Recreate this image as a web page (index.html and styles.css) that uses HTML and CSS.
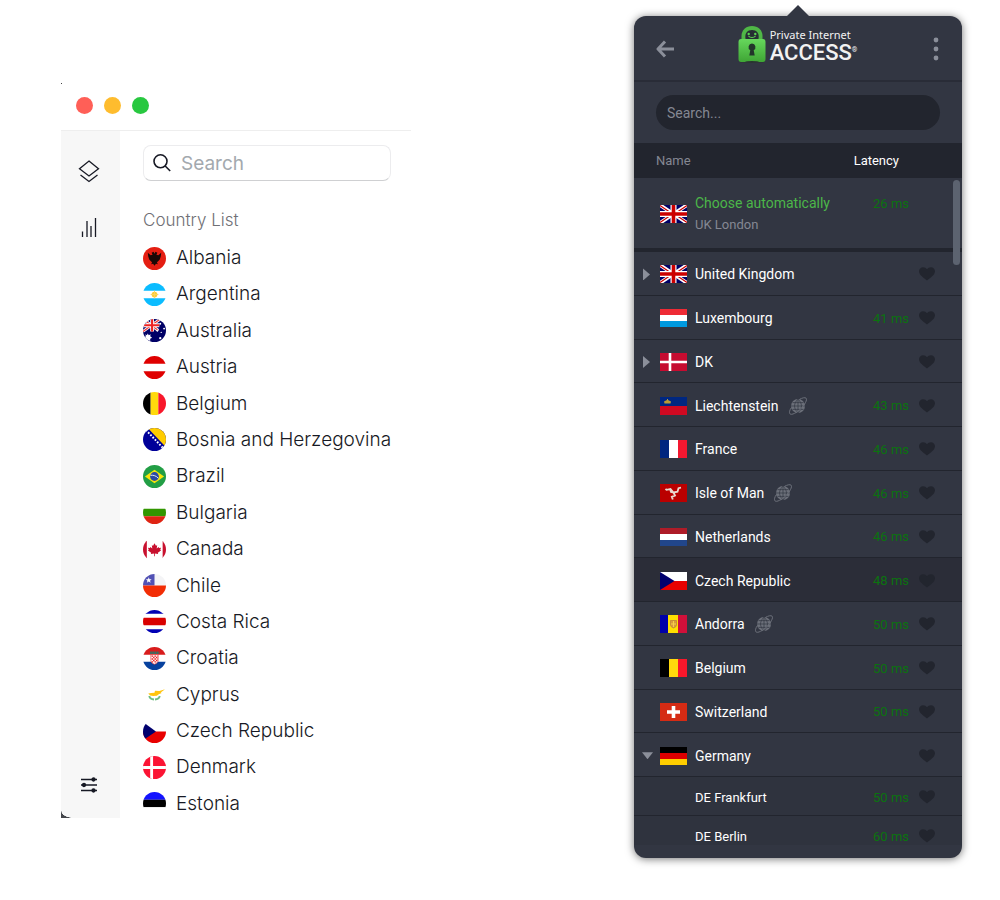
FILE: index.html
```html
<!DOCTYPE html>
<html lang="en">
<head>
<meta charset="utf-8">
<title>VPN server lists</title>
<link rel="stylesheet" href="styles.css">
</head>
<body>
<svg class="defs" aria-hidden="true">
  <symbol id="uk" viewBox="0 0 27 18"><path fill="#006" d="M0 0h27v18H0z"/><path stroke="#fff" stroke-width="3.6" d="M0 0l27 18M27 0L0 18"/><path stroke="#c00" stroke-width="1.2" d="M0 .6l10 6.6M27 17.4l-10-6.6M27 .6l-10 6.6M0 17.4l10-6.6"/><path stroke="#fff" stroke-width="6" d="M13.500 0v18M0 9h27"/><path stroke="#c00" stroke-width="3.600" d="M13.500 0v18M0 9h27"/></symbol>
  <symbol id="heart" viewBox="0 0 16 14"><path fill="#22252e" d="M8 13.600C5 11 0 8 0 4.300 0 2 1.800.2 4.100.2 5.700.2 7.200 1 8 2.300 8.800 1 10.300.2 11.900.2 14.200.2 16 2 16 4.300 16 8 11 11 8 13.600z"/></symbol>
  <symbol id="globe" viewBox="0 0 18 18"><circle cx="9" cy="9" r="7" fill="#6c707a"/><path fill="none" stroke="#323642" stroke-width=".7" d="M9 2v14M2 9h14M3.500 5.600h11M3.500 12.400h11M9 2.200c-4.600 4-4.600 9.600 0 13.600M9 2.200c4.600 4 4.600 9.600 0 13.600"/><path fill="none" stroke="#6c707a" stroke-width="1" d="M2.500 10.500C.6 13-.1 15.700 1 16.900c1.500 1.500 6.900-1.200 11-5.300C16 7.500 18.500 2.600 17.100 1.200 16 .2 13.200.8 10.500 2.400"/></symbol>
</svg>

<main class="stage">
  <section class="window">
    <header class="titlebar">
      <button class="light red" aria-label="Close"></button>
      <button class="light amber" aria-label="Minimize"></button>
      <button class="light green" aria-label="Zoom"></button>
    </header>
    <div class="window-body">
      <nav class="sidebar">
        <button class="nav-button" aria-label="Locations"><svg viewBox="0 0 24 24"><path d="M12 2l9.500 7.700L12 17 2.500 9.700zM3.500 16l8.500 6.500 8.500-6.500"/></svg></button>
        <button class="nav-button" aria-label="Statistics"><svg viewBox="0 0 24 24"><path d="M5.500 16.500V22M10 6v16M14 11v11M18.500 3v19"/></svg></button>
        <button class="nav-button last" aria-label="Settings"><svg viewBox="0 0 24 24"><path d="M4 6.500h16M4 12h16M4 17.500h16"/><circle cx="16.500" cy="6.500" r="1.500"/><circle cx="7" cy="12" r="1.500"/><circle cx="16.500" cy="17.500" r="1.500"/></svg></button>
      </nav>
      <div class="content">
        <label class="search">
          <svg viewBox="0 0 20 20" aria-hidden="true"><circle cx="8.500" cy="8.300" r="6.500"/><path d="M13.200 13l5 5"/></svg>
          <input type="search" placeholder="Search" aria-label="Search">
        </label>
        <h2 class="list-title">Country List</h2>
        <ul class="countries">
          <li><svg class="round" viewBox="0 0 24 24"><path fill="#e41e12" d="M0 0h24v24H0z"/><path d="M12 7l1-2 2 1-1 2 2 .5L19 6l-.5 4-1 3-2 2-1 1 1 2-2-.5L12 19.500 10.500 17.500l-2 .5 1-2-1-1-2-2-1-3L5 6l3 2.500 2-.5-1-2 2-1z" fill="#1a0806"/></svg>Albania</li>
          <li><svg class="round" viewBox="0 0 24 24"><path fill="#fff" d="M0 0h24v24H0z"/><path fill="#0bbcff" d="M0 0h24v8H0zM0 16h24v8H0z"/><circle cx="12" cy="12" r="3" fill="#fc3"/><path stroke="#fbd460" d="M12 8v8M8 12h8"/></svg>Argentina</li>
          <li><svg class="round" viewBox="0 0 24 24"><path fill="#006" d="M0 0h24v24H0z"/><path stroke="#fff" stroke-width="3" d="M0 0l16 12M18 0L0 13"/><path stroke="#e33" stroke-width="1.200" d="M0 0l16 12M18 0L0 13"/><path stroke="#fff" stroke-width="4" d="M9.500 0v13M0 6.500h17"/><path stroke="#e22" stroke-width="2.200" d="M9.500 0v13M0 6.500h17"/><path fill="#fff" d="M5 15l1 2 2-1-.5 2 2 1.500-2 1V23l-2-1-2 1-.5-2.500-2-1L3 18l-.5-2L4 17z"/><g fill="#fff"><circle cx="18" cy="5" r="1"/><circle cx="15" cy="12" r="1"/><circle cx="22" cy="10" r="1"/><circle cx="19" cy="14" r=".7"/><circle cx="18" cy="20" r="1.200"/></g></svg>Australia</li>
          <li><svg class="round" viewBox="0 0 24 24"><path fill="#fff" d="M0 0h24v24H0z"/><path fill="#df0000" d="M0 0h24v8H0zM0 16h24v8H0z"/></svg>Austria</li>
          <li><svg class="round" viewBox="0 0 24 24"><path d="M0 0h8v24H0z"/><path fill="#ffd90c" d="M8 0h8v24H8z"/><path fill="#f8172b" d="M16 0h8v24h-8z"/></svg>Belgium</li>
          <li><svg class="round" viewBox="0 0 24 24"><path fill="#009" d="M0 0h24v24H0z"/><path fill="#fc0" d="M5 0h19v20z"/><path stroke="#fff" stroke-width="2" stroke-dasharray="1.800 1.600" d="M3 2l18 19"/></svg>Bosnia and Herzegovina</li>
          <li><svg class="round" viewBox="0 0 24 24"><path fill="#229e45" d="M0 0h24v24H0z"/><path fill="#f8e509" d="M12 5l10 7-10 7-10-7z"/><circle cx="12" cy="12" r="4.600" fill="#2b49a3"/><path fill="none" stroke="#e8eef8" stroke-width="1" d="M7.800 10.800c3-.5 6 .5 8.200 3"/></svg>Brazil</li>
          <li><svg class="round" viewBox="0 0 24 24"><path fill="#fff" d="M0 0h24v8H0z"/><path fill="#329600" d="M0 8h24v8H0z"/><path fill="#df2413" d="M0 16h24v8H0z"/></svg>Bulgaria</li>
          <li><svg class="round" viewBox="0 0 24 24"><path fill="#fff" d="M0 0h24v24H0z"/><path fill="#c8102e" d="M0 0h4v24H0zM20.500 0H24v24h-3.500zM12 5.500l1.500 2.500 1.300-.5-.5 3.500 2-1.500.5 1 2-.2-.8 2 .8.700-3.300 2.500.3 1.200-3.400-.5V19h-.8v-2.800l-3.400.5.3-1.200-3.300-2.500.8-.7-.8-2 2 .2.500-1 2 1.500-.5-3.500 1.300.5z"/></svg>Canada</li>
          <li><svg class="round" viewBox="0 0 24 24"><path fill="#f4f4f6" d="M0 0h24v12H0z"/><path fill="#5151b4" d="M0 0h12v12H0z"/><path fill="#f22d05" d="M0 12h24v12H0z"/><path fill="#fff" d="M6 3.500l.8 2.100H9L7.300 7 8 9.200 6 7.900 4 9.200 4.700 7 3 5.600h2.200z"/></svg>Chile</li>
          <li><svg class="round" viewBox="0 0 24 24"><path fill="#fff" d="M0 0h24v24H0z"/><path fill="#0000b4" d="M0 0h24v4H0zM0 20h24v4H0z"/><path fill="#d90000" d="M0 8h24v8H0z"/></svg>Costa Rica</li>
          <li><svg class="round" viewBox="0 0 24 24"><path fill="#fff" d="M0 0h24v24H0z"/><path fill="#d81c1c" d="M0 0h24v8H0z"/><path fill="#07419e" d="M0 15.500h24V24H0z"/><path fill="#fff" stroke="#e33" stroke-width=".7" d="M8.200 8h7.600v5.500c0 2.500-1.500 3.700-3.800 4.500-2.300-.8-3.800-2-3.800-4.500z"/><path stroke="#e22" stroke-width="1.500" stroke-dasharray="1.500 1.500" d="M9 9.500h6.500M10.500 11h5M9 12.500h6.500M10.500 14h5M9 15.500h6"/><path stroke="#267a6c" stroke-width="2.400" stroke-dasharray="1.700 .5" d="M7.500 6h9.500"/></svg>Croatia</li>
          <li><svg class="round" viewBox="0 0 24 24"><path fill="#fff" d="M0 0h24v24H0z"/><path fill="#ffc40d" d="M5.500 11l3-.5 3.500-.3.500-2 4.500.2 6-1.900-4.500 3.500 1 .5-3 1.200-2 1.700-4 .2-3-.6z"/><path fill="none" stroke="#6fbd83" stroke-width="2" d="M6.500 13.500c.5 2 2.500 3.500 5 3.700M17.500 13.500c-.5 2-2.500 3.500-5 3.700"/></svg>Cyprus</li>
          <li><svg class="round" viewBox="0 0 24 24"><path fill="#fff" d="M0 0h24v12H0z"/><path fill="#e80000" d="M0 12h24v12H0z"/><path fill="#00006e" d="M0 2l13.500 10L0 21z"/></svg>Czech Republic</li>
          <li><svg class="round" viewBox="0 0 24 24"><path fill="#fb1434" d="M0 0h24v24H0z"/><path stroke="#fff" stroke-width="3" d="M9 0v24M0 12h24"/></svg>Denmark</li>
          <li><svg class="round" viewBox="0 0 24 24"><path fill="#1313ff" d="M0 0h24v8H0z"/><path d="M0 8h24v8H0z"/><path fill="#fff" d="M0 16h24v8H0z"/></svg>Estonia</li>
        </ul>
      </div>
    </div>
  </section>

  <section class="popover">
    <header class="popover-head">
      <button class="icon-button" aria-label="Back"><svg width="18" height="18" viewBox="0 0 18 18"><path fill="none" stroke="#8b8f9a" stroke-width="3" stroke-linejoin="round" d="M9 1.500L2 9l7 7.500M2.500 9H18"/></svg></button>
      <div class="brand">
        <svg width="28" height="38" viewBox="0 0 28 38" aria-hidden="true">
          <defs><linearGradient id="lock" x2="0" y2="1"><stop offset="0" stop-color="#66d75c"/><stop offset="1" stop-color="#3fa535"/></linearGradient></defs>
          <ellipse cx="14" cy="36.500" rx="13" ry="1.200" fill="#29352f"/>
          <path fill="#4fb746" d="M3.500 17v-6C3.500 5 8 1 14 1s10.500 4 10.500 10v6z"/>
          <path fill="#262e33" d="M7.500 14c-1-6 2-9 6.500-9s7.500 3 6.500 9z"/>
          <g fill="#5bd152"><circle cx="10.700" cy="9" r="1.200"/><circle cx="17.300" cy="9" r="1.200"/></g>
          <path fill="none" stroke="#5bd152" stroke-width="1.200" d="M10.500 11c1.500 2 5.500 2 7 0"/>
          <path fill="url(#lock)" d="M3 14h22q2.500 0 2.500 3v17q0 3-2.500 3h-4q-1-1-7-1t-7 1H3Q.5 37 .5 34V17q0-3 2.500-3z"/>
          <path fill="#22352a" d="M14 18.500a3.600 3.600 0 0 1 1.700 6.700l1 5.300h-5.400l1-5.300A3.600 3.600 0 0 1 14 18.500z"/>
        </svg>
        <div class="brand-text"><span class="brand-top">Private Internet</span><span class="brand-main">ACCESS<sup>®</sup></span></div>
      </div>
      <button class="icon-button menu" aria-label="Menu"><svg width="6" height="24" viewBox="0 0 6 24" fill="#8b8f9a"><circle cx="3" cy="3" r="2.400"/><circle cx="3" cy="12" r="2.400"/><circle cx="3" cy="21" r="2.400"/></svg></button>
    </header>
    <div class="filter"><input type="text" placeholder="Search..." aria-label="Search locations"></div>
    <div class="scroller">
      <table class="regions">
        <thead><tr><th scope="col">Name</th><th scope="col" class="sorted">Latency</th></tr></thead>
        <tbody class="auto">
          <tr><td class="place"><span class="toggle"></span><svg class="flag"><use href="#uk"/></svg><span class="stack"><span class="choose">Choose automatically</span><span class="sub">UK London</span></span></td><td class="ms">26 ms</td><td class="fav"></td></tr>
        </tbody>
        <tbody class="main">
          <tr><td class="place"><button class="toggle" aria-label="Expand United Kingdom"></button><svg class="flag"><use href="#uk"/></svg>United Kingdom</td><td class="ms"></td><td class="fav"><button aria-label="Favorite"><svg><use href="#heart"/></svg></button></td></tr>
          <tr><td class="place"><span class="toggle"></span><svg class="flag" viewBox="0 0 27 18"><path fill="#ee2b35" d="M0 0h27v6H0z"/><path fill="#fff" d="M0 6h27v6H0z"/><path fill="#0099df" d="M0 12h27v6H0z"/></svg>Luxembourg</td><td class="ms">41 ms</td><td class="fav"><button aria-label="Favorite"><svg><use href="#heart"/></svg></button></td></tr>
          <tr><td class="place"><button class="toggle" aria-label="Expand DK"></button><svg class="flag" viewBox="0 0 27 18"><path fill="#c60c30" d="M0 0h27v18H0z"/><path stroke="#fff" stroke-width="2.600" d="M10 0v18M0 9h27"/></svg>DK</td><td class="ms"></td><td class="fav"><button aria-label="Favorite"><svg><use href="#heart"/></svg></button></td></tr>
          <tr><td class="place"><span class="toggle"></span><svg class="flag" viewBox="0 0 27 18"><path fill="#002780" d="M0 0h27v9H0z"/><path fill="#cf0921" d="M0 9h27v9H0z"/><path fill="#b99a35" d="M4.500 6.500l-.5-2 2-1L7 3V2h1v1l1 .5 2 1-.5 2z"/></svg>Liechtenstein<svg class="globe"><use href="#globe"/></svg></td><td class="ms">43 ms</td><td class="fav"><button aria-label="Favorite"><svg><use href="#heart"/></svg></button></td></tr>
          <tr><td class="place"><span class="toggle"></span><svg class="flag" viewBox="0 0 27 18"><path fill="#00267f" d="M0 0h9v18H0z"/><path fill="#fff" d="M9 0h9v18H9z"/><path fill="#f31830" d="M18 0h9v18h-9z"/></svg>France</td><td class="ms">46 ms</td><td class="fav"><button aria-label="Favorite"><svg><use href="#heart"/></svg></button></td></tr>
          <tr><td class="place"><span class="toggle"></span><svg class="flag" viewBox="0 0 27 18"><path fill="#ba0000" d="M0 0h27v18H0z"/><path fill="none" stroke="#ead8cf" stroke-width="1.800" d="M13.500 8.500l-3-3.500-4 .8-1-1M13.500 8.500l4-.8 1-3.500 2.500-.5M13.500 8.500l1.500 3-3.200 1.300 1 2.700M10 5l1 3 2.500.5"/></svg>Isle of Man<svg class="globe"><use href="#globe"/></svg></td><td class="ms">46 ms</td><td class="fav"><button aria-label="Favorite"><svg><use href="#heart"/></svg></button></td></tr>
          <tr><td class="place"><span class="toggle"></span><svg class="flag" viewBox="0 0 27 18"><path fill="#ae1c28" d="M0 0h27v6H0z"/><path fill="#fff" d="M0 6h27v6H0z"/><path fill="#21468b" d="M0 12h27v6H0z"/></svg>Netherlands</td><td class="ms">46 ms</td><td class="fav"><button aria-label="Favorite"><svg><use href="#heart"/></svg></button></td></tr>
          <tr class="hovered"><td class="place"><span class="toggle"></span><svg class="flag" viewBox="0 0 27 18"><path fill="#fff" d="M0 0h27v9H0z"/><path fill="#e80000" d="M0 9h27v9H0z"/><path fill="#00006e" d="M0 0l14.500 9L0 18z"/></svg>Czech Republic</td><td class="ms">48 ms</td><td class="fav"><button aria-label="Favorite"><svg><use href="#heart"/></svg></button></td></tr>
          <tr><td class="place"><span class="toggle"></span><svg class="flag" viewBox="0 0 27 18"><path fill="#0000a8" d="M0 0h9v18H0z"/><path fill="#fedf00" d="M8 0h10v18H8z"/><path fill="#d0103a" d="M18 0h9v18h-9z"/><path fill="#d99a3b" stroke="#b97a45" stroke-width=".7" d="M10.500 5.500h6V10q0 2-3 3-3-1-3-3z"/><path stroke="#f5d04c" d="M13.500 6v6M11 9h5"/></svg>Andorra<svg class="globe"><use href="#globe"/></svg></td><td class="ms">50 ms</td><td class="fav"><button aria-label="Favorite"><svg><use href="#heart"/></svg></button></td></tr>
          <tr><td class="place"><span class="toggle"></span><svg class="flag" viewBox="0 0 27 18"><path d="M0 0h9v18H0z"/><path fill="#ffd90c" d="M9 0h9v18H9z"/><path fill="#f8172b" d="M18 0h9v18h-9z"/></svg>Belgium</td><td class="ms">50 ms</td><td class="fav"><button aria-label="Favorite"><svg><use href="#heart"/></svg></button></td></tr>
          <tr><td class="place"><span class="toggle"></span><svg class="flag" viewBox="0 0 27 18"><path fill="#d52b14" d="M0 0h27v18H0z"/><path stroke="#fff" stroke-width="3.600" d="M13.500 3v12M7 9h13"/></svg>Switzerland</td><td class="ms">50 ms</td><td class="fav"><button aria-label="Favorite"><svg><use href="#heart"/></svg></button></td></tr>
          <tr><td class="place"><button class="toggle open" aria-label="Collapse Germany"></button><svg class="flag" viewBox="0 0 27 18"><path d="M0 0h27v6H0z"/><path fill="#d00" d="M0 6h27v6H0z"/><path fill="#ffce00" d="M0 12h27v6H0z"/></svg>Germany</td><td class="ms"></td><td class="fav"><button aria-label="Favorite"><svg><use href="#heart"/></svg></button></td></tr>
        </tbody>
        <tbody class="children">
          <tr><td class="place">DE Frankfurt</td><td class="ms">50 ms</td><td class="fav"><button aria-label="Favorite"><svg><use href="#heart"/></svg></button></td></tr>
          <tr><td class="place">DE Berlin</td><td class="ms">60 ms</td><td class="fav"><button aria-label="Favorite"><svg><use href="#heart"/></svg></button></td></tr>
        </tbody>
      </table>
      <span class="thumb"></span>
    </div>
  </section>
</main>
</body>
</html>
```
FILE: styles.css
```css
* { box-sizing: border-box; }
body { margin: 0; background: #fff; }
button { display: block; padding: 0; border: 0; background: none; cursor: pointer; }
input { min-width: 0; border: 0; outline: 0; background: none; font: inherit; }
svg { display: block; flex: none; }
.defs { position: absolute; width: 0; height: 0; }

.stage {
  display: grid;
  grid-template-columns: minmax(0, 350px) minmax(0, 328px);
  justify-content: space-between;
  align-items: start;
  padding: 16px 38px 40px 61px;
}

/* Desktop window */
.window {
  position: relative;
  margin-top: 67px;
  font-family: Inter, "Liberation Sans", sans-serif;
  color: #171924;
}
.window::before {
  content: "";
  position: absolute;
  top: 0;
  left: 0;
  width: 1px;
  height: 1px;
  background: #444;
}
.window::after {
  content: "";
  position: absolute;
  bottom: 0;
  left: 0;
  width: 12px;
  height: 7px;
  background: radial-gradient(ellipse 12px 7px at 100% 0, transparent 94%, #44464b 100%);
}
.titlebar {
  display: flex;
  align-items: center;
  gap: 11px;
  height: 48px;
  padding: 0 15px 3px;
  border-bottom: 1px solid #eee;
}
.light { width: 17px; height: 17px; border-radius: 50%; }
.red { background: #ff5f57; }
.amber { background: #febc2e; }
.green { background: #28c840; }
.window-body { display: flex; }
.sidebar {
  display: flex;
  flex-direction: column;
  align-items: center;
  gap: 32px;
  width: 59px;
  padding: 28px 3px 21px 0;
  background: #f7f7f7;
}
.nav-button svg {
  width: 24px;
  height: 24px;
  fill: none;
  stroke: #171924;
  stroke-width: 1.3;
}
.nav-button circle { fill: #171924; }
.nav-button.last { margin-top: auto; }
.content { flex: 1; min-width: 0; padding: 14px 20px 2px 23px; }
.search {
  display: flex;
  align-items: center;
  gap: 9px;
  height: 36px;
  padding: 0 8px;
  border: 1px solid #ececee;
  border-bottom-color: #cfd0d2;
  border-radius: 8px;
  font-size: 19px;
}
.search svg { width: 20px; height: 20px; fill: none; stroke: #171924; stroke-width: 1.6; }
.search input { flex: 1; padding: 0; appearance: none; }
.search input::placeholder { color: #a3a9ae; opacity: 1; }
.list-title {
  margin: 29px 0 16px;
  font-size: 17px;
  font-weight: 300;
  line-height: 20px;
  color: #6f7075;
}
.countries {
  display: grid;
  align-content: space-between;
  min-height: 570px;
  margin: 0;
  padding: 0;
  list-style: none;
  font-size: 19px;
  font-weight: 300;
  line-height: 24px;
}
.countries li { display: flex; align-items: center; gap: 10px; white-space: nowrap; }
.round { width: 23px; height: 23px; border-radius: 50%; }

/* VPN popover */
.popover {
  position: relative;
  padding-bottom: 13px;
  border-radius: 12px;
  background: #323642;
  box-shadow: 0 1px 9px rgba(0, 0, 0, 0.55);
  font-family: Roboto, "Liberation Sans", sans-serif;
  font-size: 14px;
  color: #fff;
}
.popover::before {
  content: "";
  position: absolute;
  top: -11px;
  left: 50%;
  width: 22px;
  height: 11px;
  margin-left: -11px;
  background: #323642;
  clip-path: polygon(50% 0, 100% 100%, 0 100%);
}
.popover-head {
  display: flex;
  align-items: center;
  justify-content: space-between;
  height: 66px;
  padding: 2px 23px 0 22px;
  border-bottom: 2px solid #292c37;
}
.icon-button { width: 18px; }
.menu svg { margin-left: auto; }
.brand { display: flex; align-items: center; gap: 4px; padding-bottom: 10px; }
.brand-text { display: flex; flex-direction: column; padding-top: 3px; color: #f2f2f2; }
.brand-top { font: 400 11px/14px "Noto Sans", sans-serif; }
.brand-main { font: 500 22px/22px Roboto, sans-serif; }
.brand-main sup { font-size: 7px; line-height: 7px; vertical-align: 8px; }
.filter { padding: 13px 22px; }
.filter input {
  display: block;
  width: 100%;
  height: 35px;
  padding: 0 11px;
  border-radius: 18px;
  background: #22252e;
  color: #fff;
}
.filter input::placeholder { color: #858893; opacity: 1; }
.scroller { position: relative; }
.regions { display: block; max-height: 702px; overflow: hidden; }
.regions thead, .regions tbody { display: block; }
.regions td, .regions th { padding: 0; text-align: left; font-weight: 400; }
.regions thead tr {
  display: flex;
  align-items: center;
  justify-content: space-between;
  height: 35px;
  padding: 0 63px 0 22px;
  background: #22252e;
  font-size: 13px;
  color: #858893;
}
.regions thead .sorted { color: #fff; }
.regions tbody tr {
  display: grid;
  grid-template-columns: 1fr auto 43px;
  column-gap: 10px;
  align-items: center;
  padding-top: 2px;
  border-bottom: 1px solid #22252e;
}
.regions .auto tr { height: 74px; border-bottom-width: 4px; }
.regions .main { display: grid; grid-auto-rows: 1fr; min-height: 525px; }
.regions .children tr { height: 39px; background: #2f333e; font-size: 13px; }
.regions .children .place { padding-left: 61px; }
.regions .hovered { background: #2b2d38; }
.place { display: flex; align-items: center; white-space: nowrap; }
.toggle { flex: none; width: 26px; height: 18px; }
button.toggle::before {
  content: "";
  display: block;
  width: 7px;
  height: 12px;
  margin-left: 9px;
  background: #8b8f9a;
  clip-path: polygon(0 0, 100% 50%, 0 100%);
}
button.toggle.open::before {
  width: 11px;
  height: 7px;
  margin-left: 8px;
  clip-path: polygon(0 0, 100% 0, 50% 100%);
}
.flag { width: 27px; height: 18px; margin-right: 8px; }
.globe { width: 18px; height: 18px; margin-left: 10px; }
.stack { display: flex; flex-direction: column; line-height: 21px; }
.choose { color: #4cb649; }
.sub { font-size: 13px; color: #858893; }
.ms { font-size: 13px; color: #0b730f; }
.regions .auto .ms { padding-bottom: 21px; }
.fav svg { width: 16px; height: 14px; }
.thumb {
  position: absolute;
  top: 37px;
  right: 2px;
  width: 7px;
  height: 85px;
  border-radius: 4px;
  background: #5c6370;
}
```
